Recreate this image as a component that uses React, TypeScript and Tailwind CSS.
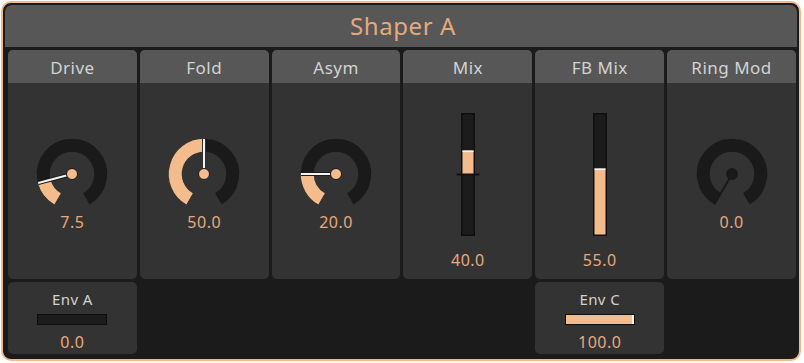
const ORANGE = "#f4bc8c"
const DARK = "#1a1a1a"

function pt(cx: number, cy: number, r: number, deg: number) {
    const a = (deg * Math.PI) / 180
    return [cx + r * Math.sin(a), cy - r * Math.cos(a)]
}

function arc(cx: number, cy: number, r: number, from: number, to: number) {
    const [x1, y1] = pt(cx, cy, r, from)
    const [x2, y2] = pt(cx, cy, r, to)
    const large = to - from > 180 ? 1 : 0
    return `M ${x1} ${y1} A ${r} ${r} 0 ${large} 1 ${x2} ${y2}`
}

function Knob({ frac }: { frac: number }) {
    const cx = 40
    const cy = 40
    const angle = -150 + frac * 300
    const active = frac > 0
    const [px, py] = pt(cx, cy, 35, angle)

    return (
        <svg width="80" height="80" viewBox="0 0 80 80">
            <path d={arc(cx, cy, 28.75, -150, 150)} stroke={DARK} strokeWidth="13" fill="none" />
            {active && <path d={arc(cx, cy, 28.75, -150, angle)} stroke={ORANGE} strokeWidth="13" fill="none" />}
            {active && <line x1={cx} y1={cy} x2={px} y2={py} stroke={DARK} strokeWidth="4" />}
            <line x1={cx} y1={cy} x2={px} y2={py} stroke={active ? "#f4f4f4" : DARK} strokeWidth={active ? 2.2 : 2} />
            <circle cx={cx} cy={cy} r="5.5" fill={active ? ORANGE : DARK} stroke={DARK} strokeWidth="1" />
        </svg>
    )
}

function Slider({ frac, bipolar = false }: { frac: number; bipolar?: boolean }) {
    // inner area of the track, below the border
    const top = 1.5
    const bottom = 121.5
    const h = bottom - top
    const mid = top + h / 2
    const fillTop = bipolar ? mid - (h / 2) * frac : bottom - h * frac
    const fillBottom = bipolar ? mid : bottom

    return (
        <svg width="26" height="123" viewBox="0 0 26 123">
            <rect x="6.75" y="0.75" width="12.5" height="121.5" fill="#1c1c1c" stroke="#0e0e0e" strokeWidth="1.5" />
            <rect x="7.5" y={fillTop} width="11" height={fillBottom - fillTop} fill={ORANGE} />
            <rect x="7.5" y={fillTop} width="11" height="1.6" fill="#f4f4f4" />
            {bipolar && <rect x="1.5" y={mid - 1} width="23" height="2" fill="#111" />}
        </svg>
    )
}

function Panel({ title, children }: { title: string; children: React.ReactNode }) {
    return (
        <div className="flex flex-col rounded-[5px] overflow-hidden bg-[#333333]">
            <div className="h-[33px] pt-[3px] bg-[#575757] flex items-center justify-center text-[17px] tracking-[0.5px] text-[#d2d2d2]">
                {title}
            </div>
            <div className="flex-1 flex flex-col items-center">{children}</div>
        </div>
    )
}

function Value({ text }: { text: string }) {
    return <p className="text-[16px] leading-[16px] tracking-[0.5px] text-[#e6a97d]">{text}</p>
}

function KnobPanel({ title, frac, value }: { title: string; frac: number; value: string }) {
    return (
        <Panel title={title}>
            <div className="mt-[51px]">
                <Knob frac={frac} />
            </div>
            <Value text={value} />
        </Panel>
    )
}

function SliderPanel({ title, frac, value, bipolar }: { title: string; frac: number; value: string; bipolar?: boolean }) {
    return (
        <Panel title={title}>
            <div className="mt-[30px] mb-[16px]">
                <Slider frac={frac} bipolar={bipolar} />
            </div>
            <Value text={value} />
        </Panel>
    )
}

function EnvPanel({ title, frac, value }: { title: string; frac: number; value: string }) {
    return (
        <div className="rounded-[5px] bg-[#333333] flex flex-col items-center pt-[9px]">
            <p className="text-[15px] leading-[16px] tracking-[0.4px] text-[#d2d2d2]">{title}</p>
            <div className="mt-[7px] w-[70px] h-[11px] border-[1.5px] border-[#0e0e0e] bg-[#1c1c1c] flex">
                {frac > 0 && (
                    <>
                        <div className="h-full bg-[#f4bc8c]" style={{ width: `calc(${frac * 100}% - 2px)` }} />
                        <div className="h-full w-[2px] bg-[#f4f4f4]" />
                    </>
                )}
            </div>
            <div className="mt-[9px]">
                <Value text={value} />
            </div>
        </div>
    )
}

export default function App() {
    return (
        <div className="w-[804px] h-[363px] bg-white font-['Noto_Sans',sans-serif] pt-px pl-px">
            <div className="w-[800px] h-[360px] rounded-[10px] border-2 border-[#f2b98b] bg-[#1b1b1b] flex flex-col pt-[2px] pb-[4px]">
                <div className="mx-[2px] h-[42px] rounded-t-[7px] bg-[#575757] flex items-center justify-center">
                    <h1 className="text-[24px] tracking-[0.6px] text-[#e6a97d] pl-1">Shaper A</h1>
                </div>

                <div className="mt-[3px] pl-[5px] pr-[3px] grid grid-cols-6 gap-x-[3px] gap-y-[3px] grid-rows-[229px_72px]">
                    <KnobPanel title="Drive" frac={0.15} value="7.5" />
                    <KnobPanel title="Fold" frac={0.5} value="50.0" />
                    <KnobPanel title="Asym" frac={0.2} value="20.0" />
                    <SliderPanel title="Mix" frac={0.4} value="40.0" bipolar />
                    <SliderPanel title="FB Mix" frac={0.55} value="55.0" />
                    <KnobPanel title="Ring Mod" frac={0} value="0.0" />

                    <EnvPanel title="Env A" frac={0} value="0.0" />
                    <div />
                    <div />
                    <div />
                    <EnvPanel title="Env C" frac={1} value="100.0" />
                    <div />
                </div>
            </div>
        </div>
    )
}
